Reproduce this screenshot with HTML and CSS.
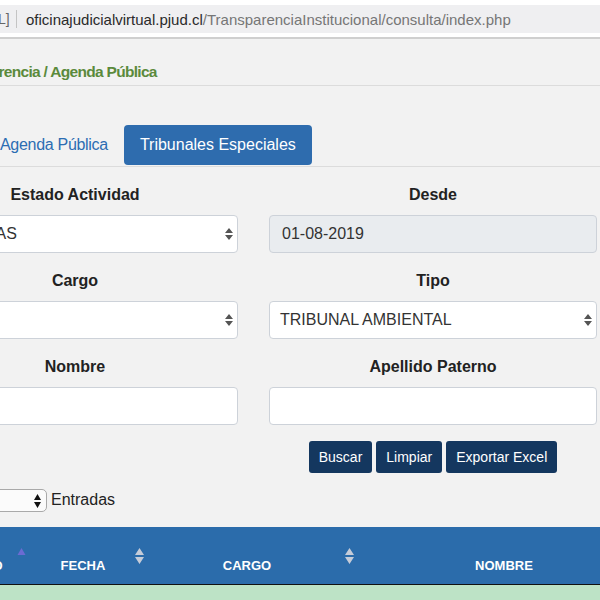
FILE: index.html
```html
<!DOCTYPE html>
<html lang="es">
<head>
<meta charset="utf-8">
<title>Agenda Pública</title>
<link rel="stylesheet" href="styles.css">
</head>
<body>
<div class="chrome">
  <div class="urlbar">
    <span class="url-pre">L]</span>
    <span class="url-sep"></span>
    <span class="host">oficinajudicialvirtual.pjud.cl</span><span class="path">/TransparenciaInstitucional/consulta/index.php</span>
  </div>
</div>

<div class="crumb"><span class="crumb-text">Transparencia / Agenda Pública</span></div>

<nav class="tabs">
  <a class="tab tab-first">Agenda Pública</a>
  <a class="tab active">Tribunales Especiales</a>
</nav>

<div class="filters">
  <div class="group">
    <div class="label">Estado Actividad</div>
    <div class="field select"><span class="val-cut">TODAS</span>
      <svg class="arrows" width="8" height="12" viewBox="0 0 8 12"><path d="M4 0L8 5H0Z M0 7H8L4 12Z" fill="#555"/></svg>
    </div>
  </div>
  <div class="group">
    <div class="label">Desde</div>
    <div class="field disabled">01-08-2019</div>
  </div>
  <div class="group">
    <div class="label">Cargo</div>
    <div class="field select">
      <svg class="arrows" width="8" height="12" viewBox="0 0 8 12"><path d="M4 0L8 5H0Z M0 7H8L4 12Z" fill="#555"/></svg>
    </div>
  </div>
  <div class="group">
    <div class="label">Tipo</div>
    <div class="field select">TRIBUNAL AMBIENTAL
      <svg class="arrows" width="8" height="12" viewBox="0 0 8 12"><path d="M4 0L8 5H0Z M0 7H8L4 12Z" fill="#555"/></svg>
    </div>
  </div>
  <div class="group">
    <div class="label">Nombre</div>
    <div class="field"></div>
  </div>
  <div class="group">
    <div class="label">Apellido Paterno</div>
    <div class="field"></div>
  </div>
  <div class="actions">
    <button class="btn">Buscar</button>
    <button class="btn">Limpiar</button>
    <button class="btn">Exportar Excel</button>
  </div>
</div>

<div class="length">
  <div class="len-select">10
    <svg class="len-arrows" width="7" height="14" viewBox="0 0 7 14"><path d="M3.5 0L7 6H0Z M0 8H7L3.5 14Z" fill="#111"/></svg>
  </div>
  <span class="len-text">Entradas</span>
</div>

<table class="grid">
  <colgroup><col class="c1"><col class="c2"><col class="c3"><col class="c4"></colgroup>
  <thead>
    <tr>
      <th>ESTADO<svg class="sort" width="9" height="16" viewBox="0 0 9 16"><path d="M4.5 0L8.5 7H0.5Z" fill="#6b6bd2"/></svg></th>
      <th>FECHA<svg class="sort" width="9" height="16" viewBox="0 0 9 16"><path d="M4.5 0L9 7H0Z M0 9H9L4.5 16Z" fill="#c5ccd8"/></svg></th>
      <th>CARGO<svg class="sort" width="9" height="16" viewBox="0 0 9 16"><path d="M4.5 0L9 7H0Z M0 9H9L4.5 16Z" fill="#c5ccd8"/></svg></th>
      <th>NOMBRE<svg class="sort" width="9" height="16" viewBox="0 0 9 16"><path d="M4.5 0L9 7H0Z M0 9H9L4.5 16Z" fill="#c5ccd8"/></svg></th>
    </tr>
  </thead>
  <tbody>
    <tr>
      <td>REALIZADA</td>
      <td>01-08-2019</td>
      <td>MINISTRO TERCER TRIBUNAL</td>
      <td>MICHAEL HANTKE DOMAS</td>
    </tr>
  </tbody>
</table>
</body>
</html>
```

FILE: styles.css
```css
html, body {
  margin: 0;
  padding: 0;
}
body {
  background: #f2f2f2;
  font-family: "Liberation Sans", Arial, sans-serif;
  color: #222;
  width: 600px;
  height: 600px;
  overflow: hidden;
}

/* browser chrome */
.chrome {
  background: #fff;
  padding: 5px 0 4px;
  border-bottom: 2px solid #cfcfcf;
}
.urlbar {
  height: 28px;
  background: #efeff1;
  display: flex;
  align-items: center;
  font-size: 15px;
  white-space: nowrap;
}
.url-pre {
  color: #666;
  font-size: 14px;
  width: 12px;
  margin-left: -2px;
}
.url-sep {
  width: 1px;
  height: 18px;
  background: #c4c4c4;
  margin: 0 9px 0 6px;
}
.host { color: #2a2a2a; }
.path { color: #767676; }

/* breadcrumb */
.crumb {
  padding: 22px 0 3px;
  border-bottom: 1px solid #dcdcdc;
  line-height: 21px;
  white-space: nowrap;
}
.crumb-text {
  display: block;
  margin-left: -56px;
  font-size: 15.5px;
  font-weight: bold;
  letter-spacing: -0.7px;
  color: #5b8a3c;
}

/* tabs */
.tabs {
  display: flex;
  margin: 39px 0 0 -16px;
  padding-bottom: 1px;
  border-bottom: 1px solid #dcdcdc;
}
.tab {
  padding: 8px 16px;
  font-size: 16px;
  line-height: 24px;
  color: #2c6db2;
  border-radius: 4px;
  white-space: nowrap;
}
.tab-first { letter-spacing: -0.3px; }
.tab.active {
  background: #2e6cae;
  color: #fff;
}

/* filter form */
.filters {
  display: grid;
  grid-template-columns: 326px 328px;
  column-gap: 31px;
  margin: 16px 0 0 -88px;
}
.group { margin-bottom: 16px; }
.label {
  text-align: center;
  font-weight: bold;
  font-size: 16px;
  line-height: 24px;
  margin-bottom: 8px;
  color: #222;
}
.field {
  position: relative;
  height: 38px;
  box-sizing: border-box;
  border: 1px solid #cdd2d9;
  border-radius: 4px;
  background: #fff;
  padding: 0 12px;
  font-size: 16px;
  line-height: 36px;
  color: #333;
  white-space: nowrap;
  overflow: hidden;
}
.field.disabled { background: #e9ecef; }
.select { padding-left: 10px; }
.val-cut { padding-left: 39px; }
.arrows {
  position: absolute;
  right: 4px;
  top: 12px;
}
.actions {
  grid-column: 2;
  display: flex;
  justify-content: center;
  gap: 4px;
}
.btn {
  background: #14375f;
  color: #fff;
  border: 0;
  border-radius: 3px;
  font-family: "Liberation Sans", Arial, sans-serif;
  font-size: 14px;
  line-height: 20px;
  padding: 6px 10px;
}

/* length selector */
.length {
  display: flex;
  align-items: center;
  gap: 4px;
  margin: 15px 0 0 -40px;
  height: 24px;
}
.len-select {
  position: relative;
  width: 87px;
  height: 23px;
  box-sizing: border-box;
  border: 1px solid #a9a9a9;
  border-radius: 5px;
  background: #fbfbfb;
  font-size: 13px;
  line-height: 21px;
  padding-left: 8px;
}
.len-arrows {
  position: absolute;
  right: 5px;
  top: 4px;
}
.len-text {
  font-size: 16px;
  color: #222;
}

/* table */
.grid {
  border-collapse: collapse;
  table-layout: fixed;
  width: 728px;
  margin: 15px 0 0 -62px;
}
.c1 { width: 96px; }
.c2 { width: 118px; }
.c3 { width: 210px; }
.c4 { width: 304px; }
.grid th {
  position: relative;
  background: #2b6cab;
  color: #fff;
  font-size: 13px;
  font-weight: bold;
  line-height: 16px;
  padding: 31px 30px 10px 10px;
  text-align: center;
  border-bottom: 1px solid #111;
}
.sort {
  position: absolute;
  right: 8px;
  top: 21px;
}
.grid td {
  background: #bde3c6;
  border-top: 1px solid #8ccf9c;
  color: #555;
  font-size: 13px;
  line-height: 18px;
  padding: 11px 30px 8px 10px;
  text-align: center;
  white-space: nowrap;
  overflow: hidden;
}
```
